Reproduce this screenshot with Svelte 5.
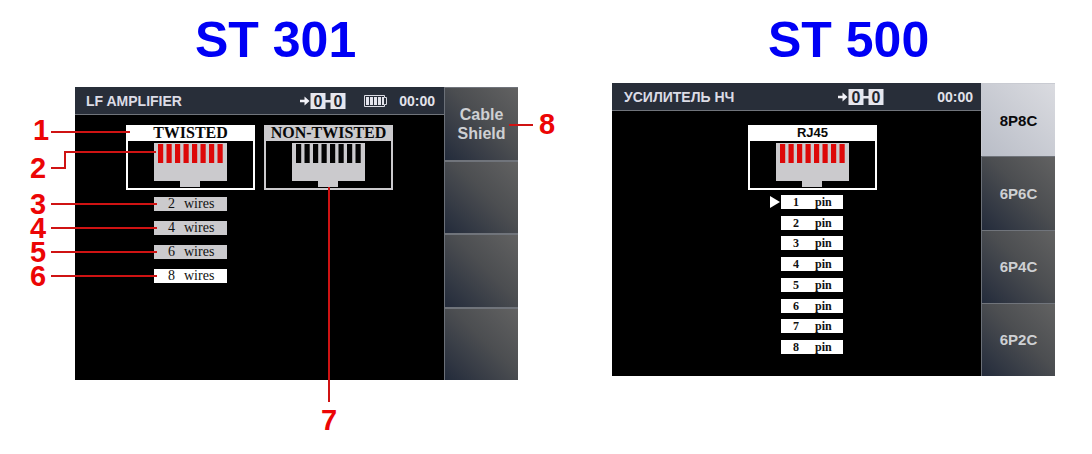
<script>
  const wires = [2, 4, 6, 8];
  const pins = [1, 2, 3, 4, 5, 6, 7, 8];
  const contacts = [4, 12.5, 21, 29.5, 38, 46.5, 55, 63.5];
  const connectors = ['8P8C', '6P6C', '6P4C', '6P2C'];

  let wireCount = $state(8);
  let connector = $state('8P8C');
  let activePin = $state(1);

  // Coordinates are relative to the top left corner of the first device.
  const callouts = [
    { n: 1, x: -42, y: 53, line: 'M-24 45H55' },
    { n: 2, x: -45, y: 91, line: 'M-24 81H-10V65H81' },
    { n: 3, x: -45, y: 127, line: 'M-24 117H82' },
    { n: 4, x: -45, y: 151, line: 'M-24 141H82' },
    { n: 5, x: -45, y: 175, line: 'M-24 165H82' },
    { n: 6, x: -45, y: 199, line: 'M-24 189H82' },
    { n: 7, x: 246, y: 343, line: 'M254 100V315' }
  ];
</script>

{#snippet link()}
  <svg class="link" width="47" height="16" viewBox="0 0 47 16" role="img" aria-label="0-0">
    <path d="M1 6.8h4.5V3.6L10.5 8l-5 4.4V9.2H1z" fill="#f2f2f8" />
    <path d="M11.5 0h15v16h-15zM31.5 0h15v16h-15zM26 7h6v2.4h-6z" fill="#e6e6ee" />
    <text x="19" y="14" text-anchor="middle">0</text>
    <text x="39" y="14" text-anchor="middle">0</text>
  </svg>
{/snippet}

{#snippet jack(color)}
  <svg class="jack" width="73" height="45" viewBox="0 0 73 45" aria-hidden="true">
    <path d="M0 0H73V38H46V44H26V38H0z" fill="#cbcacd" />
    {#each contacts as x}
      <rect {x} y="1" width="5.2" height="19" fill={color} />
    {/each}
  </svg>
{/snippet}

<main>
  <section class="first">
    <h1>ST 301</h1>
    <div class="device">
      <div class="display">
        <header>
          <span class="name">LF AMPLIFIER</span>
          {@render link()}
          <svg class="battery" width="24" height="12" viewBox="0 0 24 12" role="img" aria-label="Battery full">
            <path d="M1.5.5H21.5V2.5H23.5V9.5H21.5V11.5H1.5z" fill="none" stroke="#dcdce4" />
            <path d="M3 2h3v8H3zM7 2h3v8H7zM11 2h3v8h-3zM15 2h3v8h-3zM19 2h2v8h-2z" fill="#e4e4ec" />
          </svg>
          <time>00:00</time>
        </header>
        <div class="content">
          <div class="cards">
            <div class="card"><h2>TWISTED</h2>{@render jack('#dd0808')}</div>
            <div class="card muted"><h2>NON-TWISTED</h2>{@render jack('#050505')}</div>
          </div>
          <div class="wires">
            {#each wires as count}
              <button class:on={wireCount === count} onclick={() => (wireCount = count)}>
                <span>{count}</span><span>wires</span>
              </button>
            {/each}
          </div>
        </div>
      </div>
      <nav>
        <button>Cable<br />Shield</button>
        <button aria-label="Empty key 2"></button>
        <button aria-label="Empty key 3"></button>
        <button aria-label="Empty key 4"></button>
      </nav>
      <svg class="callouts" width="1" height="1">
        {#each callouts as c}
          <path d={c.line} />
          <text x={c.x} y={c.y}>{c.n}</text>
        {/each}
      </svg>
      <svg class="callouts right" width="1" height="1">
        <path d="M-9 38H15" />
        <text x="21" y="47">8</text>
      </svg>
    </div>
  </section>

  <section class="second">
    <h1>ST 500</h1>
    <div class="device">
      <div class="display">
        <header>
          <span class="name">УСИЛИТЕЛЬ НЧ</span>
          {@render link()}
          <time>00:00</time>
        </header>
        <div class="content">
          <div class="card"><h2>RJ45</h2>{@render jack('#dd0808')}</div>
          <div class="pins">
            {#each pins as pin}
              <button class:active={activePin === pin} onclick={() => (activePin = pin)}>
                <span>{pin}</span><span>pin</span>
              </button>
            {/each}
          </div>
        </div>
      </div>
      <nav>
        {#each connectors as item}
          <button class:selected={connector === item} onclick={() => (connector = item)}>{item}</button>
        {/each}
      </nav>
    </div>
  </section>
</main>

<style>
  :global(body) {
    margin: 0;
    background: #fff;
  }
  main {
    display: grid;
    grid-template-columns: minmax(443px, 1fr) minmax(443px, 1fr);
    gap: 94px;
    padding: 12px 37px 74px 75px;
    font-family: "Liberation Sans", Arial, sans-serif;
  }
  h1 {
    margin: 0;
    font-size: 50px;
    line-height: 56px;
    font-weight: bold;
    color: #0000f5;
  }
  .first h1 {
    padding: 0 0 19px 120px;
  }
  .second h1 {
    padding: 0 0 15px 156px;
  }
  button {
    margin: 0;
    padding: 0;
    border: 0;
    border-radius: 0;
    cursor: pointer;
  }
  .device {
    position: relative;
    display: flex;
    min-height: 293px;
  }
  .display {
    flex: 1;
    background: #000;
  }
  header {
    display: flex;
    align-items: center;
    box-sizing: border-box;
    height: 28px;
    padding: 0 9px 0 11px;
    border-bottom: 1px solid #70747b;
    background: #282e39;
    color: #dcdce6;
    font-size: 14px;
    font-weight: bold;
  }
  .second header {
    padding: 0 8px 0 12px;
  }
  .name {
    flex: 1;
  }
  time {
    color: #e2e2ea;
  }
  .link text {
    font-size: 16px;
    font-weight: bold;
    fill: #23262f;
  }
  .first .link {
    margin-right: 17px;
  }
  .second .link {
    margin-right: 53px;
  }
  .battery {
    margin-right: 12px;
  }
  .first .content {
    padding: 10px 0 0 51px;
  }
  .second .content {
    padding: 14px 0 0 136px;
  }
  .cards {
    display: flex;
    gap: 9px;
  }
  .card {
    box-sizing: border-box;
    width: 129px;
    border: 2px solid #fff;
    border-top: 0;
    text-align: center;
  }
  .card h2 {
    margin: 0 0 2px;
    background: #fff;
    color: #080808;
    font-family: "Liberation Serif", "Times New Roman", serif;
    font-size: 16px;
    line-height: 16px;
    font-weight: bold;
    white-space: nowrap;
  }
  .second .card h2 {
    font-family: inherit;
    font-size: 13px;
  }
  .muted {
    border-color: #cbcacd;
  }
  .muted h2 {
    background: #cbcacd;
  }
  .jack {
    display: block;
    margin: 0 auto;
  }
  .wires,
  .pins {
    display: flex;
    flex-direction: column;
  }
  .wires {
    width: 73px;
    margin: 7px 0 0 28px;
    gap: 10px;
  }
  .wires button,
  .pins button {
    display: flex;
    align-items: center;
    height: 14px;
    color: #111;
    font-family: Georgia, "Liberation Serif", serif;
    font-size: 14px;
    line-height: 14px;
  }
  .wires button {
    gap: 9px;
    padding-left: 14px;
    background: #cbcacd;
  }
  .wires .on {
    background: #fff;
  }
  .pins {
    justify-content: space-between;
    width: 62px;
    height: 159px;
    margin: 5px 0 0 33px;
  }
  .pins button {
    position: relative;
    gap: 16px;
    padding-left: 12px;
    background: #fff;
    font-family: "Liberation Serif", serif;
    font-size: 12px;
    font-weight: bold;
  }
  .active::before {
    content: "";
    position: absolute;
    left: -11px;
    top: 1px;
    border: solid transparent;
    border-width: 6px 0 6px 10px;
    border-left-color: #fff;
  }
  nav {
    display: flex;
    flex-direction: column;
    flex: 0 0 74px;
  }
  nav button {
    flex: 1;
    border-left: 1px solid #6b7078;
    border-top: 2px solid #70747b;
    background: linear-gradient(to bottom left, #626262, #4c4e51 45%, #232b3b);
    color: #ced0d3;
    font-family: inherit;
    font-size: 16px;
    line-height: 19px;
    font-weight: bold;
  }
  nav button:first-child {
    border-top-width: 1px;
  }
  .second nav button {
    border-top-width: 1px;
    font-size: 15px;
  }
  .second nav .selected {
    border-color: #c9cbd2;
    background: linear-gradient(to bottom left, #dadbe0, #b9bdc7);
    color: #0a0a0c;
  }
  .callouts {
    position: absolute;
    left: 0;
    top: 0;
    overflow: visible;
    pointer-events: none;
  }
  .callouts.right {
    left: 100%;
  }
  .callouts path {
    fill: none;
    stroke: #cf1313;
    stroke-width: 2;
  }
  .callouts text {
    fill: #ec0505;
    font-size: 29px;
    font-weight: bold;
  }
</style>
